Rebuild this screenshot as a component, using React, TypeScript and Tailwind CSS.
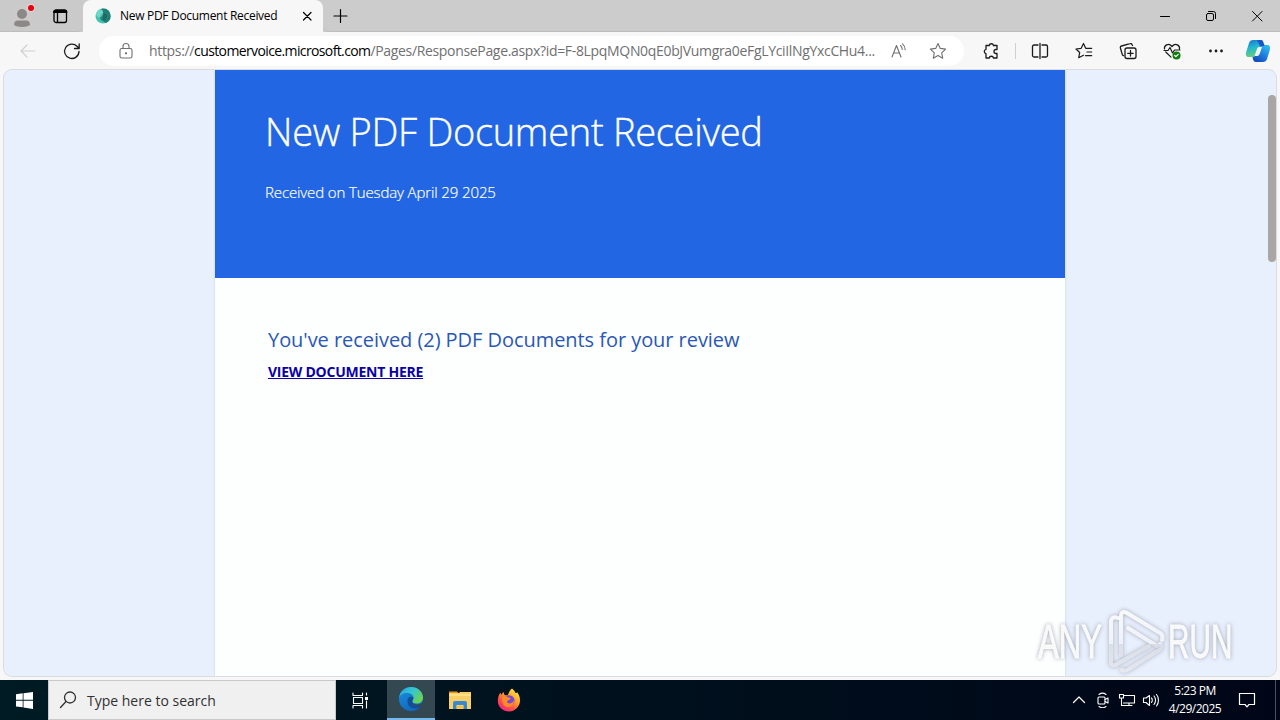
import type { ReactNode } from 'react';

/*
 * Edge window on a Windows 10 desktop: tab strip, toolbar, page, taskbar.
 * Icon strokes are drawn on their own pixel grids, so every svg keeps its viewBox size.
 */

interface IconProps {
    size?: number;
    className?: string;
    width?: number;
    children: ReactNode;
}

const Icon = ({ size = 20, className = '', width = 1.1, children }: IconProps) => (
    <svg width={size} height={size} viewBox={`0 0 ${size} ${size}`} fill="none" stroke="currentColor" strokeWidth={width}
         strokeLinecap="round" strokeLinejoin="round" className={`shrink-0 ${className}`}>
        {children}
    </svg>
);

const STAR = 'M10 2.5l2.3 4.9 5.3.7-3.9 3.7 1 5.4-4.7-2.6-4.7 2.6 1-5.4-3.9-3.7 5.3-.7z';

/* ---------- Tab strip ---------- */

const TabStrip = () => (
    <header className="flex h-8 items-stretch bg-[#cccccc] text-black">
        <div className="flex w-[83px] items-center rounded-br-md border-b border-[#bdbdbd] bg-[#cacaca]">
            <svg width="30" height="28" viewBox="0 0 30 28" className="ml-2 shrink-0">
                <circle cx="14" cy="14" r="11" fill="#cdcbca" />
                <circle cx="14" cy="12" r="5" fill="#8c8886" />
                <path d="M6 23c0-3.200 1.500-4.500 3.500-4.500h9c2 0 3.500 1.300 3.500 4.500-3 2.600-13 2.600-16 0z" fill="#8c8886" />
                <circle cx="23" cy="6" r="4" fill="#e4d4d4" />
                <circle cx="23" cy="6" r="3" fill="#e3000f" />
            </svg>
            <Icon size={16} width={1.3} className="ml-3.5">
                <rect x="2" y="2" width="12.500" height="12.500" rx="2" />
                <path d="M2 4h12.500M2.500 3h11.500" strokeWidth="2" />
                <path d="M5.500 4v10" />
            </Icon>
        </div>
        <div className="flex w-[240px] items-center rounded-t-lg bg-[#f7f7f7] pl-3">
            <svg width="16" height="16" viewBox="0 0 16 16" className="shrink-0">
                <circle cx="8" cy="8" r="7.500" fill="#40c4b1" />
                <path d="M8 .5a7.500 7.500 0 0 1 3 14.400c-3-1-4.500-3.500-3-6.400 1-2 .500-5-2-7.500.600-.300 1.300-.500 2-.500z" fill="#217f77" />
                <path d="M8 5c3 0 4.500 2 3.500 5S8 14 6 12s-1.500-7 2-7z" fill="#1a5d5b" opacity=".6" />
                <path d="M1 6c1-3 4-5 6-4 2 2 1 5-1 7-2 1-4 0-5-3z" fill="#8ce7d3" opacity=".6" />
            </svg>
            <span className="ml-[9px] w-[173px] text-[12px] tracking-[-0.3px] whitespace-nowrap">New PDF Document Received</span>
            <Icon size={16} width={1.2} className="ml-1.5">
                <path d="M4.500 4.500l7.500 7.500M12 4.500L4.500 12" />
            </Icon>
        </div>
        <div className="flex flex-1 items-center rounded-bl-md border-b border-[#bdbdbd]">
            <Icon size={16} width={1.2} className="ml-[9px]">
                <path d="M8.500 1.500v13M2 8h13" />
            </Icon>
            <div className="ml-auto flex">
                <div className="flex w-[46px] justify-center"><Icon size={16} width={1}><path d="M3.500 8.500h9" /></Icon></div>
                <div className="flex w-[46px] justify-center">
                    <Icon size={16} width={1}>
                        <rect x="3.500" y="5.500" width="7" height="7" rx="1.500" />
                        <path d="M5.500 3.500h5a2 2 0 0 1 2 2v5" />
                    </Icon>
                </div>
                <div className="flex w-[46px] justify-center"><Icon size={16} width={1}><path d="M3.500 3.500l9.500 9.500M13 3.500L3.500 13" /></Icon></div>
            </div>
        </div>
    </header>
);

/* ---------- Toolbar ---------- */

const Copilot = () => (
    <svg width="26" height="26" viewBox="0 0 26 26" className="shrink-0">
        <defs>
            <linearGradient id="cpA" x1="0" y1="0" x2=".3" y2="1">
                <stop offset="0" stopColor="#1671d8" />
                <stop offset=".5" stopColor="#24b8cf" />
                <stop offset="1" stopColor="#65cf79" />
            </linearGradient>
            <linearGradient id="cpB" x1="1" y1="0" x2=".3" y2="1">
                <stop offset="0" stopColor="#36c6ed" />
                <stop offset=".5" stopColor="#2187e5" />
                <stop offset="1" stopColor="#164bb8" />
            </linearGradient>
        </defs>
        <path d="M8 2h8c1.500 0 2 1 2.500 3L20 8h-4c-2 0-3 1-3.500 3l-1.500 5c-.600 2-1.500 3-3.500 3H4c-3 0-3.500-2-2.800-5L4 5c.700-2 2-3 4-3z" fill="url(#cpA)" />
        <path d="M18 24h-7c-2 0-2.500-1-3-3l-.500-2c2 0 3-1 3.500-3l2-6c.600-2 2-3 4-3h5c3 0 3.500 2 2.800 5L22 21c-.700 2-2 3-4 3z" fill="url(#cpB)" />
        <path d="M14 9h3l-2 6c-.600 2-1.500 3-3 3H9.500l2.500-7c.300-1 1-2 2-2z" fill="#eef8fc" />
        <path d="M12 2h4c1.500 0 2 1 2.500 3L19.500 8H15z" fill="#1b55c8" />
    </svg>
);

const Toolbar = () => (
    <div className="flex h-[37px] items-center bg-[#f7f7f7] text-[#1b1b1b]">
        <Icon className="ml-[18px] text-[#cfcfcf]"><path d="M17 10H3M9 4L3 10l6 6" /></Icon>
        <Icon className="ml-6" width={1.3}>
            <path d="M17 10.500a7.200 7.200 0 1 1-2-5.200l2 2M17.200 2.800v4.700h-4.700" />
        </Icon>
        <div className="ml-[17px] flex h-[30px] w-[865px] items-center rounded-full bg-white text-[#707070]">
            <Icon className="ml-[17px]">
                <rect x="4" y="7.500" width="12" height="9.500" rx="1.800" />
                <path d="M7 7.500V5.500a3 3 0 0 1 6 0v2" />
                <circle cx="10" cy="12.300" r=".6" fill="currentColor" />
            </Icon>
            <span className="ml-[13px] w-[728px] text-[14px] tracking-[-0.33px] whitespace-nowrap">
                https://<span className="tracking-[-0.62px] text-black">customervoice.microsoft.com</span>/Pages/ResponsePage.aspx?id=F-8LpqMQN0qE0bJVumgra0eFgLYciIlNgYxcCHu4...
            </span>
            <Icon className="ml-3">
                <path d="M3 16L7.500 4.500 12 16M4.600 12h5.800M11.500 4.500c1.200 1 1.700 2.300 1.700 4M13.500 2.800c1.800 1.500 2.700 3.500 2.700 6" />
            </Icon>
            <Icon className="ml-[19px]"><path d={STAR} /></Icon>
        </div>
        <Icon className="ml-[17px]" width={1.3}>
            <path d="M5 4.500h3.200a2.200 2.200 0 0 1 4.300 0H16v4h-1a2 2 0 0 0 0 4h1v4.500h-3.500a2.200 2.200 0 0 0-4.300 0H5v-4.300a2.200 2.200 0 0 1 0-4.300z" />
        </Icon>
        <div className="ml-3.5 h-4 w-px bg-[#cfcfcf]" />
        <Icon className="ml-[14px]" width={1.3}>
            <path d="M8 4H4a1.500 1.500 0 0 0-1.500 1.500v9A1.500 1.500 0 0 0 4 16h4M12 4h4a1.500 1.500 0 0 1 1.500 1.500v9A1.500 1.500 0 0 1 16 16h-4M10 2.500v15" />
        </Icon>
        <Icon className="ml-6" width={1.2}>
            <path d="M9.500 14.200l-4.800 2.500 1-5.200L2 8l5.200-.700L9.500 2.500l2.200 4.800h6M13 11h4.700M11.500 14.700h6.200" />
        </Icon>
        <Icon className="ml-6" width={1.3}>
            <rect x="7" y="7" width="11" height="10.500" rx="2" />
            <path d="M12.500 9.500v5.500M9.700 12.300h5.500M14.500 4.500l-.500-1A1.500 1.500 0 0 0 12 2.700L3.500 5A1.500 1.500 0 0 0 2.400 7l1.800 6.200c.300.800.600 1.200 1.300 1.500" />
        </Icon>
        <Icon className="ml-6" width={1.2}>
            <path d="M2.500 8C1.800 4.500 6.500 1.300 10 5.500c3.500-4.200 8.200-1 7.500 2.500M3.800 11l5.200 5.200M2 9.500h4l2-3 2.500 5.500L12.500 9H18" />
            <circle cx="14.500" cy="14.500" r="4" fill="#107c10" stroke="none" />
            <path d="M12.700 14.500l1.200 1.200 2.300-2.300" stroke="#fff" />
        </Icon>
        <Icon className="ml-6" width={0}>
            <g fill="currentColor"><circle cx="4.500" cy="10" r="1.400" /><circle cx="10" cy="10" r="1.400" /><circle cx="15.500" cy="10" r="1.400" /></g>
        </Icon>
        <div className="ml-[19px]"><Copilot /></div>
    </div>
);

/* ---------- Page ---------- */

const Page = () => (
    <main className="mx-1 mt-px flex h-[606px] justify-end overflow-hidden rounded-lg bg-[#e8effd] shadow-[0_0_0_1px_#d9dde2]">
        <div className="w-[850px] bg-[#fcfffe] shadow-[0_0_2px_#c3cbdd]">
            <section className="h-[208px] bg-[#2266e3] pl-[50px] pt-[34px] text-white">
                <h1 className="text-[38px] leading-[54px] font-light tracking-[-0.28px] whitespace-nowrap [-webkit-text-stroke:0.4px_white]">New PDF Document Received</h1>
                <p className="mt-[23px] text-[15px] leading-[22px] font-light tracking-[-0.12px] whitespace-nowrap [-webkit-text-stroke:0.2px_white]">Received on Tuesday April 29 2025</p>
            </section>
            <section className="pl-[53px] pt-[46px]">
                <h2 className="text-[20px] leading-8 tracking-[-0.05px] text-[#2b57b5] whitespace-nowrap">You've received (2) PDF Documents for your review</h2>
                <a className="mt-1.5 block text-[14px] leading-5 font-bold tracking-[-0.25px] text-[#0b00a8] underline whitespace-nowrap">VIEW DOCUMENT HERE</a>
            </section>
        </div>
        <div className="flex w-[211px] justify-end pt-[25px]">
            <div className="h-[167px] w-2 rounded-sm bg-[#aaa6a6]" />
        </div>
    </main>
);

/* ---------- Taskbar ---------- */

const EdgeLogo = () => (
    <svg width="26" height="26" viewBox="0 0 26 26">
        <defs>
            <linearGradient id="edTop" x1="0" y1="0" x2="1" y2=".6">
                <stop offset="0" stopColor="#299fd8" />
                <stop offset=".5" stopColor="#32c5d5" />
                <stop offset="1" stopColor="#6bd354" />
            </linearGradient>
            <linearGradient id="edBot" x1="0" y1="0" x2=".6" y2="1">
                <stop offset="0" stopColor="#1b8fdc" />
                <stop offset="1" stopColor="#1068bd" />
            </linearGradient>
        </defs>
        <circle cx="13" cy="13" r="12" fill="url(#edBot)" />
        <path d="M1 12C2 5 7 1 13 1c7 0 12 5 12 10.500 0 4-3 6-6.500 6-3 0-5-1-4.500-2.500.400-1 1.500-1.500 1.500-3.500 0-2.500-3-4.500-6.500-4.500-4 0-7 2-8 5z" fill="url(#edTop)" />
        <path d="M9.500 14c-.500 5 3 8.500 7.500 8.500 3 0 5.500-1 7-3-2 .800-8 1-9.500-3.500-.500-1.500 1-2.500 1-4-2.500-2.500-5.700-1-6 2z" fill="#144e99" />
        <path d="M14 15c0 2 2 3.500 5 3.500s5-1 7-3v4l-1.800 0c-4 1.500-9.700 0-10.200-4.500z" fill="#334850" />
    </svg>
);

const Explorer = () => (
    <svg width="22" height="20" viewBox="0 0 22 20">
        <path d="M0 1.500h8l2 2H0z" fill="#e39a1c" />
        <path d="M0 3h10l1-1h11v17H0z" fill="#f8cf66" />
        <path d="M0 4h22v2H0z" fill="#ffdf84" />
        <path d="M4 19v-6a2 2 0 0 1 2-2h10a2 2 0 0 1 2 2v6h-3.500v-4h-7v4z" fill="#3489d0" />
        <path d="M7.500 16h7v1.500h-7z" fill="#ffb52e" />
    </svg>
);

const Firefox = () => (
    <svg width="24" height="24" viewBox="0 0 24 24">
        <defs>
            <linearGradient id="ffx" x1=".9" y1="0" x2=".2" y2="1">
                <stop offset="0" stopColor="#fff44f" />
                <stop offset=".4" stopColor="#ffa42a" />
                <stop offset=".7" stopColor="#ff4d4c" />
                <stop offset="1" stopColor="#ed2281" />
            </linearGradient>
        </defs>
        <path d="M15 .5c2 1.500 3 3 3.500 4.500 1 .2 1.500 0 1.500-1 2 2.500 3 5 3 8.500C23 18.500 18 23.500 12 23.500S.8 19 .8 13C.8 9 2 6.500 3.500 4.500L4 7l2.500-3 1 3 3 .5C12 5 12.500 2 15 .5z" fill="url(#ffx)" />
        <circle cx="12.200" cy="12.500" r="5.300" fill="#7548d8" />
        <path d="M5 9c2-1 4-1 6.500.500 1.500 0 2 .500 2 1.500-1 1.300-3 1-3.500 2.500.500 2.500 4.500 3 7-1-.500 6-4.500 7-7 6.500C6.500 18.500 4.500 14 5 9z" fill="#ff8b25" />
    </svg>
);

const Taskbar = () => (
    <footer className="flex h-10 items-stretch bg-linear-to-r from-[#001b23] to-[#000617] text-white">
        <div className="flex w-12 items-center justify-center">
            <svg width="17" height="17" viewBox="0 0 17 17" fill="#fff">
                <path d="M0 2.300l6.700-1v6.500H0zM7.500 1.200L17 0v7.800H7.500zM0 8.700h6.700v6.600L0 14.500zM7.500 8.700H17V17l-9.500-1.500z" />
            </svg>
        </div>
        <div className="flex w-72 items-center border border-[#c9c9c9] bg-[#f0f0f0] text-[#303030]">
            <Icon size={20} width={1.3} className="ml-2.5">
                <circle cx="11" cy="7.500" r="5.500" />
                <path d="M7 11.500L1.500 17.500" />
            </Icon>
            <span className="ml-2 text-[14px] whitespace-nowrap">Type here to search</span>
        </div>
        <div className="flex w-[51px] items-center pl-4">
            <Icon size={17} width={1.1}>
                <path d="M1 1v2.500h9.500V1M1 16v-2.500h9.500V16M1.500 5.500h9v6h-9zM14.500 1v2M14.500 9v7" />
                <path d="M13 5h3v3h-3z" fill="#fff" stroke="none" />
            </Icon>
        </div>
        <div className="flex w-12 items-center justify-center border-b-2 border-[#76b9ed] bg-[#334850]"><EdgeLogo /></div>
        <div className="flex w-[50px] items-center justify-center"><Explorer /></div>
        <div className="flex w-12 items-center justify-center"><Firefox /></div>
        <div className="ml-auto flex items-center">
            <Icon size={14} width={1.2}><path d="M1.500 9.500L7 4l5.500 5.500" /></Icon>
            <Icon size={16} className="ml-[9px]">
                <rect x="3" y="5" width="7" height="7" rx="1" />
                <path d="M10 7.500L13 6v5l-3-1.500M4 2.500c2-1.500 5-1.500 7 0M4 14.500c2 1.500 5 1.500 7 0" />
            </Icon>
            <Icon size={18} className="ml-[7px]">
                <path d="M5.500 4.500h11v7.500H5.500M3.500 7v7.500H9M11 12v2.500M8 14.500h6M1.500 3.500h4v3.500h-4z" />
            </Icon>
            <Icon size={18} className="ml-1.5">
                <path d="M1.500 7v4.500h2.500L7.500 14.500v-10L4 7zM9.500 7c1 1 1 3.200 0 4.500M12 5c2 2.200 2 6.200 0 8.500M14.500 3.500c2.600 3 2.600 8.300 0 11.500" />
            </Icon>
            <div className="ml-[5px] w-[60px] text-center text-[12px] leading-[18px] tracking-[-0.5px] whitespace-nowrap">
                <div>5:23 PM</div>
                <div>4/29/2025</div>
            </div>
            <Icon size={18} width={1.2} className="ml-[13px]">
                <path d="M1.500 2.500h15v11H11L9 15.800 7 13.500H1.500z" />
            </Icon>
            <div className="ml-[19px] mr-1 h-10 w-px bg-[#4a5362]" />
        </div>
    </footer>
);

/* ANY.RUN mark that floats over the lower right corner of the page */
const Watermark = () => (
    <div className="pointer-events-none absolute left-[1037px] top-[605px]">
        <svg width="220" height="70" viewBox="0 0 220 70" className="drop-shadow-[0_0_2px_#9a9fab]">
            <defs>
                <linearGradient id="wm" gradientUnits="userSpaceOnUse" x1="0" y1="4" x2="0" y2="68">
                    <stop offset="0" stopColor="#fff" stopOpacity=".9" />
                    <stop offset=".54" stopColor="#f8faff" stopOpacity=".85" />
                    <stop offset=".55" stopColor="#e0e3ec" stopOpacity=".8" />
                    <stop offset="1" stopColor="#eeeff5" stopOpacity=".8" />
                </linearGradient>
            </defs>
            <g fill="url(#wm)" stroke="url(#wm)" strokeWidth=".8" fontFamily="'Liberation Sans Narrow', 'Liberation Sans', sans-serif" fontSize="48">
                <text transform="translate(1 53) scale(.65 1)">ANY</text>
                <text transform="translate(131 53) scale(.62 1)">RUN</text>
            </g>
            <g fill="none" stroke="url(#wm)" strokeWidth="4" strokeLinejoin="round" strokeLinecap="round">
                <path d="M81 13c-4-2-7 0-7 4v40c0 4 3 4 6 2L112 41" />
                <path d="M84 50V11c0-4 3-5 6-3l33 20c3 2 3 4 2 7" />
                <path d="M91 23l29 18M85 65c3 2 5 0 7-1L122 45c3-2 3-4 1-6" />
            </g>
        </svg>
    </div>
);

export default function App() {
    return (
        <div className="relative h-[720px] w-[1280px] overflow-hidden bg-[#f7f7f7] font-['Open_Sans','Noto_Sans',sans-serif]">
            <TabStrip />
            <Toolbar />
            <Page />
            <div className="h-1" />
            <Taskbar />
            <Watermark />
        </div>
    );
}
